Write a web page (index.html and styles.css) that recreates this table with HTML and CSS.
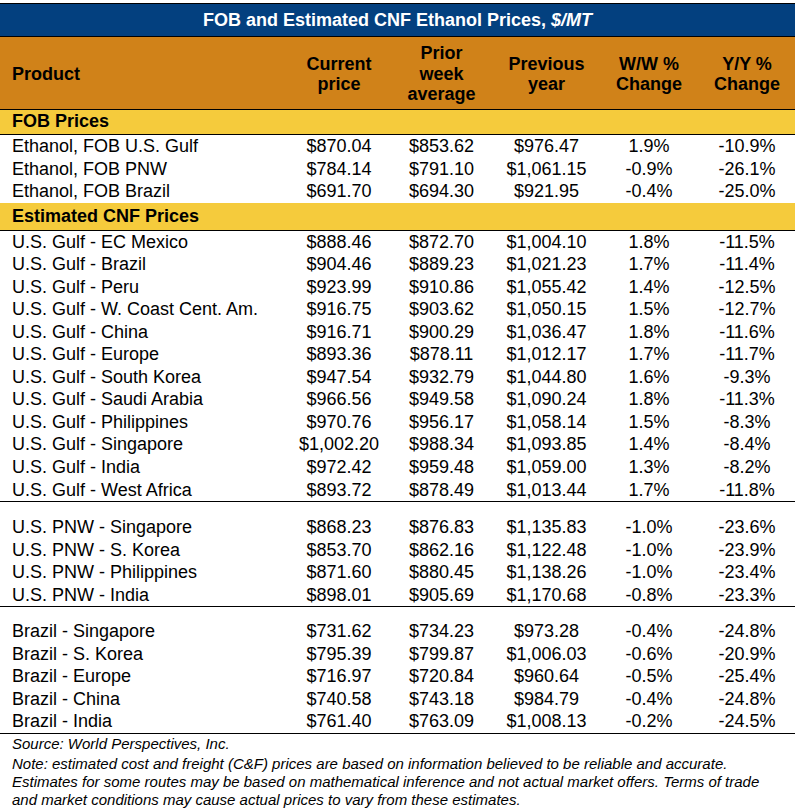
FILE: index.html
```html
<!DOCTYPE html>
<html>
<head>
<meta charset="utf-8">
<link rel="stylesheet" href="styles.css">
</head>
<body>
<div class="wrap">
  <div class="title">FOB and Estimated CNF Ethanol Prices, <i>$/MT</i></div>
  <div class="row head">
    <div class="left">Product</div>
    <div>Current<br>price</div>
    <div>Prior<br>week<br>average</div>
    <div>Previous<br>year</div>
    <div>W/W %<br>Change</div>
    <div>Y/Y %<br>Change</div>
  </div>
  <div class="section s1">FOB Prices</div>
  <div class="group">
    <div class="row"><div>Ethanol, FOB U.S. Gulf</div><div>$870.04</div><div>$853.62</div><div>$976.47</div><div>1.9%</div><div>-10.9%</div></div>
    <div class="row"><div>Ethanol, FOB PNW</div><div>$784.14</div><div>$791.10</div><div>$1,061.15</div><div>-0.9%</div><div>-26.1%</div></div>
    <div class="row"><div>Ethanol, FOB Brazil</div><div>$691.70</div><div>$694.30</div><div>$921.95</div><div>-0.4%</div><div>-25.0%</div></div>
  </div>
  <div class="section s2">Estimated CNF Prices</div>
  <div class="group ruled">
    <div class="row"><div>U.S. Gulf - EC Mexico</div><div>$888.46</div><div>$872.70</div><div>$1,004.10</div><div>1.8%</div><div>-11.5%</div></div>
    <div class="row"><div>U.S. Gulf - Brazil</div><div>$904.46</div><div>$889.23</div><div>$1,021.23</div><div>1.7%</div><div>-11.4%</div></div>
    <div class="row"><div>U.S. Gulf - Peru</div><div>$923.99</div><div>$910.86</div><div>$1,055.42</div><div>1.4%</div><div>-12.5%</div></div>
    <div class="row"><div>U.S. Gulf - W. Coast Cent. Am.</div><div>$916.75</div><div>$903.62</div><div>$1,050.15</div><div>1.5%</div><div>-12.7%</div></div>
    <div class="row"><div>U.S. Gulf - China</div><div>$916.71</div><div>$900.29</div><div>$1,036.47</div><div>1.8%</div><div>-11.6%</div></div>
    <div class="row"><div>U.S. Gulf - Europe</div><div>$893.36</div><div>$878.11</div><div>$1,012.17</div><div>1.7%</div><div>-11.7%</div></div>
    <div class="row"><div>U.S. Gulf - South Korea</div><div>$947.54</div><div>$932.79</div><div>$1,044.80</div><div>1.6%</div><div>-9.3%</div></div>
    <div class="row"><div>U.S. Gulf - Saudi Arabia</div><div>$966.56</div><div>$949.58</div><div>$1,090.24</div><div>1.8%</div><div>-11.3%</div></div>
    <div class="row"><div>U.S. Gulf - Philippines</div><div>$970.76</div><div>$956.17</div><div>$1,058.14</div><div>1.5%</div><div>-8.3%</div></div>
    <div class="row"><div>U.S. Gulf - Singapore</div><div>$1,002.20</div><div>$988.34</div><div>$1,093.85</div><div>1.4%</div><div>-8.4%</div></div>
    <div class="row"><div>U.S. Gulf - India</div><div>$972.42</div><div>$959.48</div><div>$1,059.00</div><div>1.3%</div><div>-8.2%</div></div>
    <div class="row"><div>U.S. Gulf - West Africa</div><div>$893.72</div><div>$878.49</div><div>$1,013.44</div><div>1.7%</div><div>-11.8%</div></div>
  </div>
  <div class="group ruled spaced gap1">
    <div class="row"><div>U.S. PNW - Singapore</div><div>$868.23</div><div>$876.83</div><div>$1,135.83</div><div>-1.0%</div><div>-23.6%</div></div>
    <div class="row"><div>U.S. PNW - S. Korea</div><div>$853.70</div><div>$862.16</div><div>$1,122.48</div><div>-1.0%</div><div>-23.9%</div></div>
    <div class="row"><div>U.S. PNW - Philippines</div><div>$871.60</div><div>$880.45</div><div>$1,138.26</div><div>-1.0%</div><div>-23.4%</div></div>
    <div class="row"><div>U.S. PNW - India</div><div>$898.01</div><div>$905.69</div><div>$1,170.68</div><div>-0.8%</div><div>-23.3%</div></div>
  </div>
  <div class="group ruled spaced">
    <div class="row"><div>Brazil - Singapore</div><div>$731.62</div><div>$734.23</div><div>$973.28</div><div>-0.4%</div><div>-24.8%</div></div>
    <div class="row"><div>Brazil - S. Korea</div><div>$795.39</div><div>$799.87</div><div>$1,006.03</div><div>-0.6%</div><div>-20.9%</div></div>
    <div class="row"><div>Brazil - Europe</div><div>$716.97</div><div>$720.84</div><div>$960.64</div><div>-0.5%</div><div>-25.4%</div></div>
    <div class="row"><div>Brazil - China</div><div>$740.58</div><div>$743.18</div><div>$984.79</div><div>-0.4%</div><div>-24.8%</div></div>
    <div class="row"><div>Brazil - India</div><div>$761.40</div><div>$763.09</div><div>$1,008.13</div><div>-0.2%</div><div>-24.5%</div></div>
  </div>
  <div class="notes">
    <p>Source: World Perspectives, Inc.</p>
    <p>Note: estimated cost and freight (C&amp;F) prices are based on information believed to be reliable and accurate. Estimates for some routes may be based on mathematical inference and not actual market offers. Terms of trade and market conditions may cause actual prices to vary from these estimates.</p>
  </div>
</div>
</body>
</html>
```

FILE: styles.css
```css
html, body {
  margin: 0;
  padding: 0;
  background: #ffffff;
}
body {
  font-family: "Liberation Sans", Arial, sans-serif;
  color: #000000;
  font-size: 18px;
}
.wrap {
  width: 795px;
  padding-top: 3px;
}
.title {
  background: #03407f;
  color: #ffffff;
  font-weight: bold;
  height: 32px;
  line-height: 32px;
  text-align: center;
  border-top: 1px solid #000;
  border-bottom: 1px solid #000;
}
.row {
  display: grid;
  grid-template-columns: 289px 100px 105px 105px 100px 96px;
  align-items: center;
  height: 22.5px;
  line-height: 22.5px;
  white-space: nowrap;
}
.row > div {
  text-align: center;
}
.row > div:first-child {
  text-align: left;
  padding-left: 12px;
}
.row.head {
  background: #d08219;
  font-weight: bold;
  line-height: 20.5px;
  padding-top: 2px;
  box-sizing: border-box;
  border-bottom: 1px solid #000;
  height: 73px;
}
.section {
  background: #f5cb3c;
  font-weight: bold;
  padding-left: 12px;
  border-bottom: 1px solid #000;
}
.s1 {
  height: 24px;
  line-height: 23px;
}
.s2 {
  height: 27px;
  line-height: 27px;
}
.group.ruled .row {
  height: 22.55px;
  line-height: 22.55px;
}
.group.ruled {
  border-bottom: 1px solid #000;
}
.group.spaced {
  padding-top: 13px;
}
.group.spaced.gap1 {
  padding-top: 14px;
}
.notes {
  font-style: italic;
  font-size: 15px;
  line-height: 18px;
  padding: 1px 24px 0 12px;
}
.notes p {
  margin: 0;
}
.notes p + p {
  margin-top: 2px;
}
```
